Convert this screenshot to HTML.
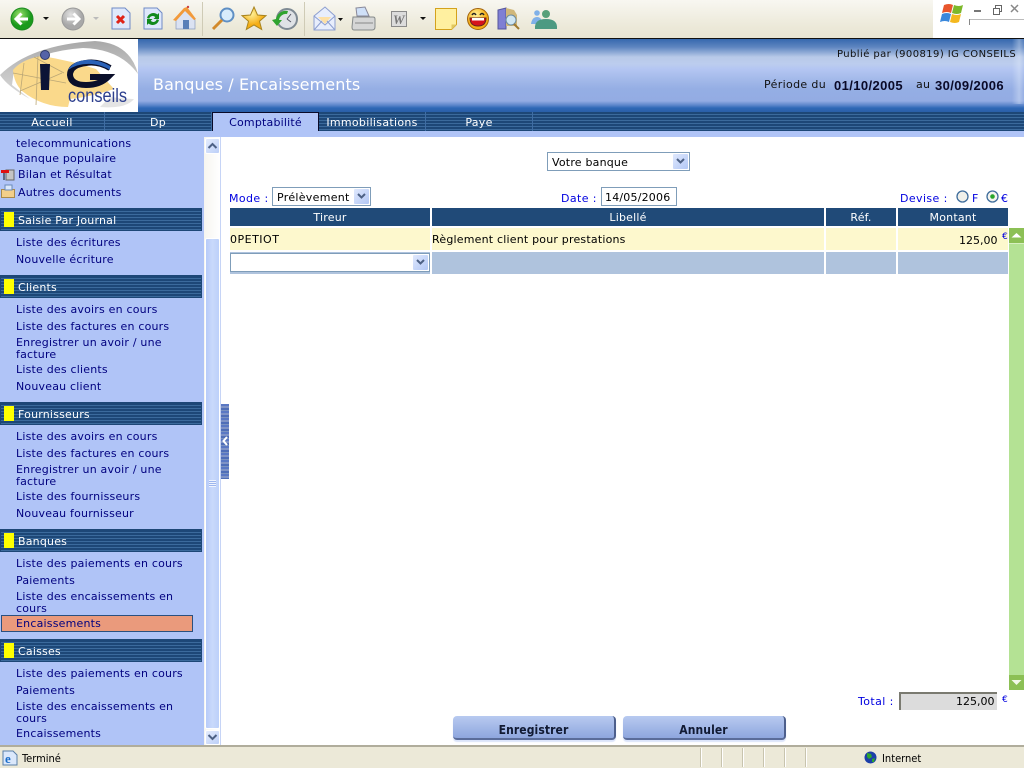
<!DOCTYPE html>
<html><head><meta charset="utf-8"><title>Banques / Encaissements</title>
<style>
html,body{margin:0;padding:0;width:1024px;height:768px;overflow:hidden;background:#fff}
body{position:relative;font:11px "DejaVu Sans",Verdana,sans-serif;color:#000;letter-spacing:.2px}
.a,.t,.m,.h,.c{position:absolute}
.t,.m,.h,.c{white-space:nowrap;line-height:12px}
.m{color:#00007f;left:16px;margin-top:2px}
.h{color:#fff;left:18px;margin-top:2px}
.c{color:#0000e0;letter-spacing:.4px}
.st{position:absolute;left:0;width:202px;height:23px;box-sizing:border-box;background:repeating-linear-gradient(#1d4777 0 2px,#3b6a9c 2px 3px);border:1px solid #1d4777}
.y{position:absolute;left:4px;top:212px;width:10px;height:15px;background:#ffff00}
.tb{position:absolute;top:112px;height:19px;color:#fff;text-align:center;line-height:21px;border-right:1px solid #3f6da3;box-sizing:border-box;letter-spacing:.3px}
.hd{position:absolute;top:208px;height:18px;background:#204a78;color:#fff;text-align:center;line-height:20px}
.r1{position:absolute;top:228px;height:22px;background:#fdf8cd}
.r2{position:absolute;top:252px;height:22px;background:#afc3dd}
.sel{position:absolute;box-sizing:border-box;border:1px solid #7f9db9;background:#fff}
.ar{position:absolute;top:1px;right:1px;bottom:1px;width:15px;background:linear-gradient(135deg,#dfe8fd,#b2c7f5);border-radius:1px}
.btn{position:absolute;top:716px;height:24px;box-sizing:border-box;border-radius:4px;background:linear-gradient(#b8caf0,#8ea6de);border-right:2px solid #4d5f8c;border-bottom:2px solid #5a6c9a;text-align:center;font:bold 12px/28px "DejaVu Sans Condensed","Liberation Sans",sans-serif;letter-spacing:.1px;color:#111a33;box-shadow:0 2px 1px #dbe4fa}
svg{position:absolute;overflow:visible}
.dv{position:absolute;top:748px;width:1px;height:19px;background:#fff;border-left:1px solid #c8c4ae}
</style></head><body>

<!-- Toolbar -->
<div class="a" style="left:0;top:0;width:1024px;height:38px;background:linear-gradient(#f8f7f1,#ece9d9 70%,#e8e5d3)"></div>
<div class="a" style="left:0;top:38px;width:1024px;height:1px;background:#111"></div>
<div class="a" style="left:202px;top:2px;width:1px;height:34px;background:#cfcbb6"></div>
<div class="a" style="left:304px;top:2px;width:1px;height:34px;background:#cfcbb6"></div>

<svg style="left:0;top:0" width="560" height="38">
 <defs>
  <radialGradient id="g1" cx=".4" cy=".3"><stop offset="0" stop-color="#9be06a"/><stop offset="1" stop-color="#1a9a1c"/></radialGradient>
  <radialGradient id="g2" cx=".4" cy=".3"><stop offset="0" stop-color="#e2e2e2"/><stop offset="1" stop-color="#a8a8a8"/></radialGradient>
  <radialGradient id="g3" cx=".4" cy=".3"><stop offset="0" stop-color="#fff29a"/><stop offset="1" stop-color="#f5ad14"/></radialGradient>
 </defs>
 <circle cx="22" cy="19" r="11" fill="url(#g1)" stroke="#1b8a20"/>
 <path d="M28 19H17M21.500 13.500L16 19l5.500 5.500" fill="none" stroke="#fff" stroke-width="3"/>
 <path d="M43 17h6l-3 3z" fill="#111"/>
 <circle cx="73" cy="19" r="11" fill="url(#g2)" stroke="#999"/>
 <path d="M67 19h11M73.500 13.500L79 19l-5.500 5.500" fill="none" stroke="#fff" stroke-width="3"/>
 <path d="M93 17h6l-3 3z" fill="#bbb"/>
 <path d="M112 8h13l5 5v16h-18z" fill="#dfe8fb" stroke="#6f8ac6"/>
 <path d="M117 16l7 7m0-7l-7 7" stroke="#e02418" stroke-width="3"/>
 <path d="M144 8h13l5 5v16h-18z" fill="#dfe8fb" stroke="#6f8ac6"/>
 <path d="M147 18a6.500 6.500 0 0 1 10.500-3.500l1.500-1.500v6h-5.500l1.800-1.800a3.500 3.500 0 0 0-6 1.500z" fill="#128a1c"/>
 <path d="M159 20a6.500 6.500 0 0 1-10.500 3.500l-1.500 1.500v-6h5.500l-1.800 1.800a3.500 3.500 0 0 0 6-1.500z" fill="#128a1c"/>
 <path d="M176 20l9-10 10 10v9h-19z" fill="#dbe2f2" stroke="#8a9bbd" stroke-width=".7"/>
 <path d="M173 20l11-12 3-1 9 12-2 1-9-9-9 10z" fill="#f29a3a"/>
 <rect x="183" y="20" width="6" height="9" fill="#5a7fb8"/>
 <circle cx="188" cy="7" r="1.200" fill="#c44"/>
 <circle cx="227" cy="15" r="6.500" fill="#d8ecfb" stroke="#5f8fc4" stroke-width="2"/>
 <path d="M222 20l-9 9" stroke="#d28a2c" stroke-width="3"/>
 <path d="M254 7l3.500 8 8.500.7-6.500 5.500 2.200 8.300-7.700-4.500-7.700 4.500 2.200-8.300-6.500-5.500 8.500-.7z" fill="url(#g3)" stroke="#a8841f"/>
 <circle cx="287" cy="19" r="10" fill="#dfe2e6" stroke="#7f8a94" stroke-width="2"/>
 <path d="M287 19l4-5M287 19l4 3" stroke="#556" stroke-width="1"/>
 <path d="M276 19a10 10 0 0 1 12-8l-1 3a7 7 0 0 0-8 6h3l-5 6-5-6z" fill="#2fa32f"/>
 <path d="M314 16l11-9 10 9v14h-21z" fill="#e8eefc" stroke="#8d9fd0"/>
 <path d="M318 17h13l-6 7z" fill="#fde0a6"/>
 <path d="M314 16l11 9 10-9M314 30l8-9M335 30l-8-9" fill="none" stroke="#8d9fd0"/>
 <path d="M338 18h5l-2.500 3z" fill="#111"/>
 <path d="M356 8l9-1 4 9h-12z" fill="#cfe0f8" stroke="#889"/>
 <path d="M353 17h20q2 0 2 2v8q0 3-3 3h-18q-2 0-2-3z" fill="#d5d6d6" stroke="#858a8a"/>
 <path d="M355 23h18" stroke="#888"/>
 <rect x="391.500" y="11.500" width="15" height="15" fill="#dcdcdc" stroke="#8a8a8a"/>
 <text x="393" y="24" font-family="'Liberation Serif',serif" font-size="13" font-style="italic" font-weight="bold" fill="#777" letter-spacing="0">W</text>
 <path d="M420 17h6l-3 3z" fill="#111"/>
 <path d="M435.500 8.500h21v16l-5 5h-16z" fill="#fff0a0" stroke="#d4a21c"/>
 <path d="M451.500 29.500v-5h5z" fill="#e0c860"/>
 <circle cx="478" cy="19" r="10.500" fill="url(#g3)" stroke="#a2620c"/>
 <path d="M472 15q2-3 4 0M480 15q2-3 4 0" fill="none" stroke="#222" stroke-width="1.500"/>
 <path d="M470 18h16q0 8-8 8t-8-8z" fill="#d6121c" stroke="#622"/>
 <path d="M472 18h12v2.500h-12z" fill="#fff"/>
 <path d="M498 10l8-2v21l-8 0z" fill="#7f7fd4" stroke="#56569c"/>
 <path d="M506 8l8 2 3 5v11h-11z" fill="#d0b77a"/>
 <circle cx="511" cy="20" r="5" fill="#cfe6f3" stroke="#6a8aa0"/>
 <path d="M514 24l5 5" stroke="#a07a30" stroke-width="2"/>
 <circle cx="537" cy="13" r="2.800" fill="#7fb0e8"/>
 <path d="M531 24q1-7 6-7t5 7z" fill="#7fb0e8"/>
 <circle cx="546" cy="14" r="4" fill="#57a079"/>
 <path d="M535 29q-1-10 11-10t11 10z" fill="#4d9a82"/>
</svg>

<!-- Windows flag box -->
<div class="a" style="left:933px;top:0;width:91px;height:38px;background:#fff"></div>
<div class="a" style="left:933px;top:38px;width:22px;height:1px;background:#111"></div>
<svg style="left:940px;top:2px" width="30" height="22">
 <path d="M4 3q5-2 9 0l-2 8q-4-2-9 0z" fill="#e8562c"/>
 <path d="M14 3q5 2 9 0l-2 8q-4 2-9 0z" fill="#7cb82a"/>
 <path d="M2 12q5-2 9 0l-2 8q-4-2-9 0z" fill="#3a88dc"/>
 <path d="M12 12q5 2 9 0l-2 8q-4 2-9 0z" fill="#f4b81e"/>
</svg>
<svg style="left:974px;top:4px" width="50" height="12">
 <path d="M0 7h7" stroke="#777" stroke-width="2"/>
 <path d="M19.500 4.500h6v6h-6zM21.500 4V1.500h6v6H26" fill="none" stroke="#666"/>
 <path d="M37 1l7 7m0-7l-7 7" stroke="#888" stroke-width="1.500"/>
</svg>
<div class="a" style="left:969px;top:19px;width:55px;height:1px;background:#bbb"></div>
<div class="a" style="left:969px;top:19px;width:1px;height:6px;background:#888"></div>

<!-- Header -->
<div class="a" style="left:138px;top:39px;width:886px;height:73px;background:linear-gradient(#3568ae 0,#5d85c0 8px,#b8c9e8 18px,#bccdee 25px,#b4c6f2 30px,#a4baea 40px,#95aee4 50px,#93ace3 62px,#5f88cc 66px,#2f68b6 69px,#2a5fa8 73px)"></div>
<div class="a" style="left:1012px;top:39px;width:12px;height:65px;background:linear-gradient(90deg,rgba(255,255,255,0),rgba(225,235,250,.4) 60%,rgba(160,185,230,.2))"></div>
<div class="a" style="left:0;top:39px;width:138px;height:73px;background:#fff;overflow:hidden">
 <svg style="left:0;top:0" width="138" height="73">
  <defs><linearGradient id="gb" x1="0" y1="0" x2="0" y2="1"><stop offset="0" stop-color="#a9a9a9"/><stop offset="1" stop-color="#dcdcdc"/></linearGradient></defs>
  <path d="M0 36Q30 6 95 2Q130 4 138 35Q120 10 83 9Q40 12 14 31L12 46L30 60Q8 48 0 36Z" fill="url(#gb)"/>
  <path d="M110 58Q128 60 134 60Q126 70 100 68Z" fill="#e4e4e4"/>
  <path d="M13 31Q22 20 42 17Q72 22 96 30L114 50Q90 58 70 60L68 68Q42 68 22 52Q14 44 13 31Z" fill="#fad98b"/>
  <path d="M24 24L20 56M38 17L36 66M13 34L66 44M20 52L62 34M34 18L64 34" stroke="#bba776" stroke-width=".8" fill="none"/>
  <circle cx="45" cy="16" r="4.500" fill="#5563a8" stroke="#2e3a6c"/>
  <path d="M40 25h10l-1 26h-8z" fill="#0c1436"/>
  <path d="M110 29Q98 22 86 24Q70 26 70 36Q71 46 86 46Q100 46 108 38H90" fill="none" stroke="#0a0f2a" stroke-width="6"/>
  <path d="M110 27Q98 20 86 21Q73 22 68 31Q78 24 92 25Q102 26 110 31z" fill="#2a62b8"/>
  <text x="68" y="63" font-family="'Liberation Sans',sans-serif" font-size="19" fill="#2d3f8e" textLength="59" lengthAdjust="spacingAndGlyphs" letter-spacing="0">conseils</text>
 </svg>
</div>
<div class="t" style="left:153px;top:76px;font-size:16px;line-height:18px;color:#fff;letter-spacing:.1px">Banques / Encaissements</div>
<div class="t" style="left:837px;top:49px;font-size:10px;color:#111;letter-spacing:.42px">Publié par (900819) IG CONSEILS</div>
<div class="t" style="left:764px;top:79px;color:#111;letter-spacing:.35px">Période du</div>
<div class="t" style="left:834px;top:79px;font:bold 13px/14px 'Liberation Sans',sans-serif;letter-spacing:.4px;color:#0a0a28">01/10/2005</div>
<div class="t" style="left:916px;top:79px;color:#111">au</div>
<div class="t" style="left:935px;top:79px;font:bold 13px/14px 'Liberation Sans',sans-serif;letter-spacing:.4px;color:#0a0a28">30/09/2006</div>

<!-- Tabs -->
<div class="a" style="left:0;top:112px;width:1024px;height:19px;background:repeating-linear-gradient(#1d4777 0 2px,#3b6a9c 2px 3px)"></div>
<div class="a" style="left:0;top:131px;width:1024px;height:6px;background:#b0c4f7"></div>
<div class="tb" style="left:0;width:105px">Accueil</div>
<div class="tb" style="left:105px;width:107px">Dp</div>
<div class="a" style="left:212px;top:112px;width:107px;height:19px;box-sizing:border-box;border:1px solid #0a0a28;border-bottom:0;background:#b0c4f7;color:#00007f;text-align:center;line-height:19px">Comptabilité</div>
<div class="tb" style="left:319px;width:107px">Immobilisations</div>
<div class="tb" style="left:426px;width:107px">Paye</div>

<!-- Sidebar -->
<div class="a" style="left:0;top:137px;width:204px;height:608px;background:#b0c4f7"></div>
<div class="m" style="top:136px">telecommunications</div>
<div class="m" style="top:151px">Banque populaire</div>
<svg style="left:1px;top:167px" width="14" height="14"><path d="M5 3h8v10H5z" fill="#c4c4c4" stroke="#666"/><path d="M0 3h8v3H0z" fill="#e01010"/><path d="M3 6v7" stroke="#111"/></svg>
<div class="m" style="left:18px;top:167px">Bilan et Résultat</div>
<svg style="left:1px;top:184px" width="14" height="14"><path d="M.5 5.500h13v8H.500z" fill="#f3cf8a" stroke="#a98a4a"/><path d="M4 1h7v5H4z" fill="#dbe8fb" stroke="#6a8ab8"/></svg>
<div class="m" style="left:18px;top:185px">Autres documents</div>

<div class="st" style="top:208px"></div><div class="y"></div>
<div class="h" style="top:213px">Saisie Par Journal</div>
<div class="m" style="top:235px">Liste des écritures</div>
<div class="m" style="top:252px">Nouvelle écriture</div>

<div class="st" style="top:275px"></div><div class="y" style="top:279px"></div>
<div class="h" style="top:280px">Clients</div>
<div class="m" style="top:302px">Liste des avoirs en cours</div>
<div class="m" style="top:319px">Liste des factures en cours</div>
<div class="m" style="top:335px">Enregistrer un avoir / une</div>
<div class="m" style="top:347px">facture</div>
<div class="m" style="top:362px">Liste des clients</div>
<div class="m" style="top:379px">Nouveau client</div>

<div class="st" style="top:402px"></div><div class="y" style="top:406px"></div>
<div class="h" style="top:407px">Fournisseurs</div>
<div class="m" style="top:429px">Liste des avoirs en cours</div>
<div class="m" style="top:446px">Liste des factures en cours</div>
<div class="m" style="top:462px">Enregistrer un avoir / une</div>
<div class="m" style="top:474px">facture</div>
<div class="m" style="top:489px">Liste des fournisseurs</div>
<div class="m" style="top:506px">Nouveau fournisseur</div>

<div class="st" style="top:529px"></div><div class="y" style="top:533px"></div>
<div class="h" style="top:534px">Banques</div>
<div class="m" style="top:556px">Liste des paiements en cours</div>
<div class="m" style="top:573px">Paiements</div>
<div class="m" style="top:589px">Liste des encaissements en</div>
<div class="m" style="top:601px">cours</div>
<div class="a" style="left:1px;top:615px;width:192px;height:17px;box-sizing:border-box;background:#ea9a7c;border:1px solid #2a5080"></div>
<div class="m" style="top:616px">Encaissements</div>

<div class="st" style="top:639px"></div><div class="y" style="top:643px"></div>
<div class="h" style="top:644px">Caisses</div>
<div class="m" style="top:666px">Liste des paiements en cours</div>
<div class="m" style="top:683px">Paiements</div>
<div class="m" style="top:699px">Liste des encaissements en</div>
<div class="m" style="top:711px">cours</div>
<div class="m" style="top:726px">Encaissements</div>

<!-- Sidebar scrollbar -->
<div class="a" style="left:204px;top:137px;width:16px;height:608px;background:linear-gradient(90deg,#f6f5f0,#ffffff)"></div>
<div class="a" style="left:205px;top:138px;width:15px;height:16px;box-sizing:border-box;background:linear-gradient(135deg,#e4ecfd,#bccff8);border:1px solid #fff;border-radius:2px"></div>
<svg style="left:205px;top:138px" width="15" height="16"><path d="M3.500 10l4-4 4 4" fill="none" stroke="#4d6185" stroke-width="2"/></svg>
<div class="a" style="left:205px;top:238px;width:15px;height:491px;box-sizing:border-box;background:linear-gradient(90deg,#b7cbf9,#c9d9fb 50%,#bcd0f9);border:1px solid #fff;border-radius:2px"></div>
<div class="a" style="left:209px;top:480px;width:7px;height:7px;background:repeating-linear-gradient(#eef3fe 0 1px,#9db6ee 1px 2px)"></div>
<div class="a" style="left:205px;top:730px;width:15px;height:15px;box-sizing:border-box;background:linear-gradient(135deg,#e4ecfd,#bccff8);border:1px solid #fff;border-radius:2px"></div>
<svg style="left:205px;top:730px" width="15" height="15"><path d="M3.500 5l4 4 4-4" fill="none" stroke="#4d6185" stroke-width="2"/></svg>
<div class="a" style="left:220px;top:137px;width:1px;height:608px;background:#c6d4f6"></div>
<!-- Collapse handle -->
<div class="a" style="left:221px;top:404px;width:8px;height:75px;background:repeating-linear-gradient(#5a78c4 0 2px,#7f93c6 2px 4px,#4f6eb8 4px 6px,#7a92c0 6px 7px)"></div>
<svg style="left:221px;top:434px" width="8" height="14"><path d="M6 3L2.500 7 6 11" fill="none" stroke="#fff" stroke-width="2"/></svg>

<!-- Bank select -->
<div class="sel" style="left:547px;top:152px;width:143px;height:19px"><span class="t" style="left:4px;top:4px">Votre banque</span><div class="ar"></div><svg style="right:4px;top:5px" width="9" height="7"><path d="M1 1l3.500 3.500L8 1" fill="none" stroke="#4d6185" stroke-width="2"/></svg></div>

<!-- Form row -->
<div class="c" style="left:229px;top:193px">Mode :</div>
<div class="sel" style="left:272px;top:187px;width:99px;height:19px"><span class="t" style="left:4px;top:4px;letter-spacing:.3px">Prélèvement</span><div class="ar"></div><svg style="right:4px;top:5px" width="9" height="7"><path d="M1 1l3.500 3.500L8 1" fill="none" stroke="#4d6185" stroke-width="2"/></svg></div>
<div class="c" style="left:561px;top:193px">Date :</div>
<div class="sel" style="left:601px;top:187px;width:76px;height:19px"><span class="t" style="left:3px;top:4px">14/05/2006</span></div>
<div class="c" style="left:900px;top:193px">Devise :</div>
<svg style="left:956px;top:190px" width="14" height="14"><circle cx="6.500" cy="6.500" r="5.500" fill="#f0f0ea" stroke="#3f6d9c" stroke-width="1.300"/></svg>
<div class="c" style="left:972px;top:193px">F</div>
<svg style="left:986px;top:190px" width="14" height="14"><circle cx="6.500" cy="6.500" r="5.500" fill="#f4f4ee" stroke="#3f6d9c" stroke-width="1.300"/><circle cx="6.500" cy="6.500" r="2.300" fill="#2aa52a"/></svg>
<div class="c" style="left:1001px;top:193px">€</div>

<!-- Table -->
<div class="hd" style="left:230px;width:200px">Tireur</div>
<div class="hd" style="left:432px;width:392px">Libellé</div>
<div class="hd" style="left:826px;width:70px">Réf.</div>
<div class="hd" style="left:898px;width:110px">Montant</div>
<div class="r1" style="left:230px;width:200px"></div>
<div class="r1" style="left:432px;width:392px"></div>
<div class="r1" style="left:826px;width:70px"></div>
<div class="r1" style="left:898px;width:110px"></div>
<div class="t" style="left:230px;top:234px;letter-spacing:.5px">0PETIOT</div>
<div class="t" style="left:432px;top:234px">Règlement client pour prestations</div>
<div class="t" style="left:959px;top:235px;letter-spacing:0">125,00</div>
<div class="c" style="left:1002px;top:231px;font-size:9px">€</div>
<div class="r2" style="left:230px;width:200px"></div>
<div class="r2" style="left:432px;width:392px"></div>
<div class="r2" style="left:826px;width:70px"></div>
<div class="r2" style="left:898px;width:110px"></div>
<div class="sel" style="left:230px;top:253px;width:200px;height:19px;border-width:1px"><div class="ar"></div><svg style="right:4px;top:5px" width="9" height="7"><path d="M1 1l3.500 3.500L8 1" fill="none" stroke="#4d6185" stroke-width="2"/></svg></div>

<!-- Green scrollbar -->
<div class="a" style="left:1009px;top:228px;width:15px;height:462px;background:#b4e294"></div>
<div class="a" style="left:1009px;top:228px;width:15px;height:15px;background:#8cc055;border-bottom:1px solid #d6efc0"></div>
<svg style="left:1009px;top:228px" width="15" height="15"><path d="M2.500 9.500L7.500 5l5 4.500z" fill="#fff"/></svg>
<div class="a" style="left:1009px;top:675px;width:15px;height:15px;background:#8cc055"></div>
<svg style="left:1009px;top:675px" width="15" height="15"><path d="M2.500 5l5 5 5-5z" fill="#f2f8e8"/></svg>

<!-- Total -->
<div class="c" style="left:858px;top:696px">Total :</div>
<div class="a" style="left:899px;top:692px;width:98px;height:18px;box-sizing:border-box;background:#dcdcdc;border-left:2px solid #7a7a70;border-top:2px solid #7a7a70"></div>
<div class="t" style="left:956px;top:696px;letter-spacing:0">125,00</div>
<div class="c" style="left:1002px;top:694px;font-size:9px">€</div>

<div class="btn" style="left:453px;width:163px">Enregistrer</div>
<div class="btn" style="left:623px;width:163px">Annuler</div>

<!-- Status bar -->
<div class="a" style="left:0;top:745px;width:1024px;height:23px;background:#ece9d8;border-top:2px solid #b0ad9c;box-sizing:border-box"></div>
<svg style="left:2px;top:750px" width="16" height="16"><path d="M1 1h10l4 4v10H1z" fill="#dbe8fb" stroke="#5a7fa8"/><text x="3" y="13" font-family="'Liberation Serif',serif" font-size="13" font-weight="bold" fill="#1a6cc8">e</text></svg>
<div class="t" style="left:22px;top:752px;font:11px/13px 'DejaVu Sans Condensed','Liberation Sans',sans-serif;letter-spacing:0">Terminé</div>
<div class="dv" style="left:700px"></div>
<div class="dv" style="left:721px"></div>
<div class="dv" style="left:742px"></div>
<div class="dv" style="left:763px"></div>
<div class="dv" style="left:784px"></div>
<div class="dv" style="left:805px"></div>
<svg style="left:864px;top:751px" width="13" height="13"><circle cx="6.500" cy="6.500" r="6" fill="#1c3fa8"/><path d="M3 2l4 1 1 3-3 2-2-2zM8 8l3-1-1 4-2 0z" fill="#2ea52e"/></svg>
<div class="t" style="left:882px;top:752px;font:11px/13px 'DejaVu Sans Condensed','Liberation Sans',sans-serif;letter-spacing:0">Internet</div>

</body></html>
